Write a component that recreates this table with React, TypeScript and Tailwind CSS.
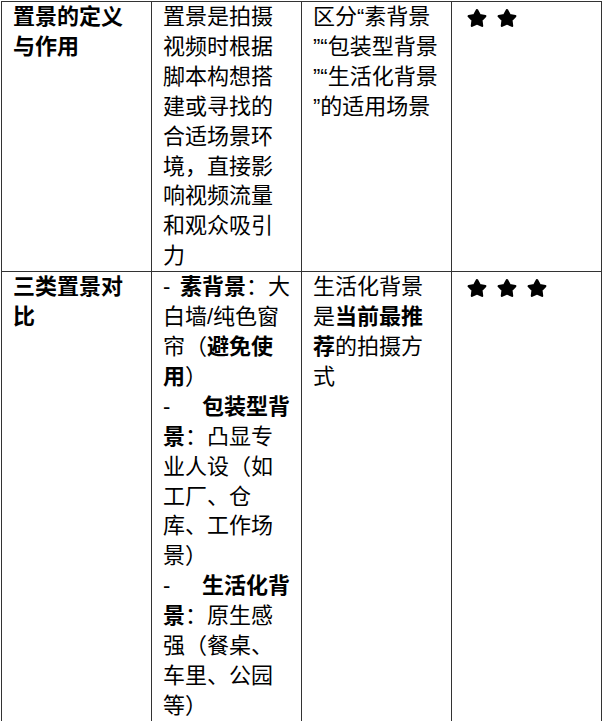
import type { ReactNode } from "react";

const font = { fontFamily: '"Liberation Sans", "Noto Sans CJK SC", sans-serif' };

function Star() {
  return (
    <svg viewBox="2.2 1.8 19.6 18.7" className="h-[18px] w-[20px]">
      <polygon
        points="12,3 14.82,8.12 20.56,9.22 16.57,13.48 17.29,19.28 12,16.8 6.71,19.28 7.43,13.48 3.44,9.22 9.18,8.12"
        fill="#000"
        stroke="#000"
        strokeWidth="2.4"
        strokeLinejoin="round"
      />
    </svg>
  );
}

function Stars({ count }: { count: number }) {
  return (
    <div className="flex gap-[10px] pl-[4px] pt-[7px]">
      {Array.from({ length: count }).map((_, i) => (
        <Star key={i} />
      ))}
    </div>
  );
}

// first line of a "- xxx" item: dash on the left, text pushed to the right edge
function Item({ head, rest }: { head: ReactNode; rest: ReactNode }) {
  return (
    <div>
      <div className="flex justify-between">
        <span>-</span>
        <span>{head}</span>
      </div>
      <div>{rest}</div>
    </div>
  );
}

function Cell({ children }: { children: ReactNode }) {
  return (
    <td className="border border-[#333] px-[11px] py-0 align-top">{children}</td>
  );
}

export default function App() {
  return (
    <div className="min-h-screen bg-white pl-px pt-px" style={font}>
      <table className="w-[600px] table-fixed border-collapse text-[22px] leading-[29.9px] text-black">
        <colgroup>
          <col className="w-[150px]" />
          <col className="w-[150px]" />
          <col className="w-[150px]" />
          <col className="w-[150px]" />
        </colgroup>
        <tbody>
          <tr>
            <Cell>
              <b>置景的定义与作用</b>
            </Cell>
            <Cell>置景是拍摄视频时根据脚本构想搭建或寻找的合适场景环境，直接影响视频流量和观众吸引力</Cell>
            <Cell>
              区分“素背景
              <br />
              ”“包装型背景
              <br />
              ”“生活化背景
              <br />
              ”的适用场景
            </Cell>
            <Cell>
              <Stars count={2} />
            </Cell>
          </tr>
          <tr>
            <Cell>
              <b>三类置景对比</b>
            </Cell>
            <Cell>
              <Item
                head={
                  <>
                    <b>素背景</b>：大
                  </>
                }
                rest={
                  <>
                    白墙/纯色窗帘（<b>避免使用</b>）
                  </>
                }
              />
              <Item
                head={<b>包装型背</b>}
                rest={
                  <>
                    <b>景</b>：凸显专业人设（如工厂、仓库、工作场景）
                  </>
                }
              />
              <Item
                head={<b>生活化背</b>}
                rest={
                  <>
                    <b>景</b>：原生感强（餐桌、车里、公园等）
                  </>
                }
              />
            </Cell>
            <Cell>
              生活化背景是<b>当前最推荐</b>的拍摄方式
            </Cell>
            <Cell>
              <Stars count={3} />
            </Cell>
          </tr>
        </tbody>
      </table>
    </div>
  );
}
